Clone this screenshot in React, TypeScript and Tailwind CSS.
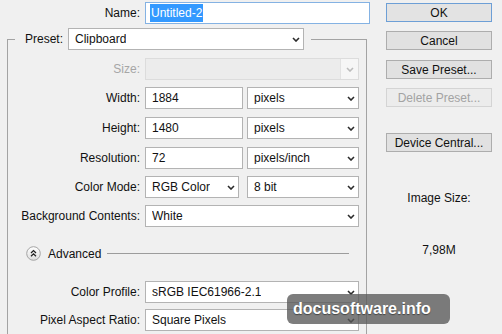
import clsx from "clsx";

function Chevron({ disabled }: { disabled?: boolean }) {
  return (
    <svg width="8" height="5" viewBox="0 0 8 5" className="shrink-0">
      <path
        d="M1 1L4 4L7 1"
        fill="none"
        stroke={disabled ? "#bcbcbc" : "#2b2b2b"}
        strokeWidth="1.6"
      />
    </svg>
  );
}

function Select({ value, className }: { value: string; className?: string }) {
  return (
    <div
      className={clsx(
        "flex h-[22px] items-center justify-between border border-[#b3b3b3] bg-white pl-[6px] pr-[3px]",
        className,
      )}
    >
      <span className="truncate">{value}</span>
      <Chevron />
    </div>
  );
}

function Input({ value, className }: { value: string; className?: string }) {
  return (
    <div className={clsx("flex h-[22px] items-center border border-[#b3b3b3] bg-white pl-[6px]", className)}>
      {value}
    </div>
  );
}

function Row({ label, children, className, dim }: { label: string; children: React.ReactNode; className?: string; dim?: boolean }) {
  return (
    <div className={clsx("flex items-center gap-[5px]", className)}>
      <div className={clsx("w-[132px] whitespace-nowrap text-right", dim && "text-[#a6a6a6]")}>{label}</div>
      {children}
    </div>
  );
}

function Button({ label, primary, disabled, className }: { label: string; primary?: boolean; disabled?: boolean; className?: string }) {
  return (
    <div
      className={clsx(
        "flex h-[19px] items-center justify-center border",
        primary ? "border-[#6d9fd6] bg-[#e3e3e3]" : "border-[#adadad] bg-[#e1e1e1]",
        disabled && "border-[#d4d4d4] bg-[#ececec] text-[#a3a3a3]",
        className,
      )}
    >
      {label}
    </div>
  );
}

function AdvancedToggle() {
  return (
    <svg width="15" height="15" viewBox="0 0 15 15" className="shrink-0">
      <defs>
        <linearGradient id="adv" x1="0" y1="0" x2="0" y2="1">
          <stop offset="0" stopColor="#ffffff" />
          <stop offset="1" stopColor="#dedede" />
        </linearGradient>
      </defs>
      <circle cx="7.5" cy="7.5" r="6.8" fill="url(#adv)" stroke="#a4a4a4" strokeWidth="1" />
      <path d="M5 7L7.5 4.6L10 7M5 10.2L7.5 7.8L10 10.2" fill="none" stroke="#222" strokeWidth="1.3" />
    </svg>
  );
}

export default function App() {
  return (
    <div className="relative h-[334px] w-[502px] overflow-hidden bg-[#f0f0f0] font-['Liberation_Sans',Arial,sans-serif] text-[12px] leading-none text-[#111]">
      <div className="flex">
        <div className="w-[386px]">
          <div className="flex items-center gap-[5px] pt-[2px]">
            <div className="w-[140px] text-right">Name:</div>
            <div className="flex h-[22px] w-[225px] items-center border border-[#84b2e3] bg-white pl-[4px]">
              <span className="bg-[#3399ff] px-[1px] py-[3px] text-white">Untitled-2</span>
            </div>
          </div>

          <fieldset className="ml-[7px] mt-[4px] h-[320px] w-[360px] min-w-0 border border-b-0 border-[#a3a3a3] p-0">
            <legend className="ml-[7px] flex items-center gap-[5px] pl-[8px] pr-[7px]">
              <span className="w-[40px] text-right">Preset:</span>
              <Select value="Clipboard" className="w-[236px]" />
            </legend>

            <Row label="Size:" dim className="mt-[8px]">
              <div className="flex h-[22px] w-[214px] items-center border border-[#dcdcdc] bg-[#ececec]">
                <div className="flex-1" />
                <div className="flex h-full w-[18px] items-center justify-center border-l border-[#e2e2e2] bg-[#f6f6f6]">
                  <Chevron disabled />
                </div>
              </div>
            </Row>

            <Row label="Width:" className="mt-[7px]">
              <Input value="1884" className="w-[98px]" />
              <Select value="pixels" className="-ml-px w-[112px]" />
            </Row>

            <Row label="Height:" className="mt-[8px]">
              <Input value="1480" className="w-[98px]" />
              <Select value="pixels" className="-ml-px w-[112px]" />
            </Row>

            <Row label="Resolution:" className="mt-[8px]">
              <Input value="72" className="w-[98px]" />
              <Select value="pixels/inch" className="-ml-px w-[112px]" />
            </Row>

            <Row label="Color Mode:" className="mt-[7px]">
              <Select value="RGB Color" className="w-[94px]" />
              <Select value="8 bit" className="ml-[3px] w-[112px]" />
            </Row>

            <Row label="Background Contents:" className="mt-[7px]">
              <Select value="White" className="w-[214px]" />
            </Row>

            <div className="ml-[18px] mr-[17px] mt-[19px] flex h-[15px] items-center">
              <AdvancedToggle />
              <span className="ml-[7px]">Advanced</span>
              <div className="ml-[6px] h-px flex-1 bg-[#9c9c9c]" />
            </div>

            <Row label="Color Profile:" className="mt-[20px]">
              <Select value="sRGB IEC61966-2.1" className="w-[214px]" />
            </Row>

            <Row label="Pixel Aspect Ratio:" className="mt-[6px]">
              <Select value="Square Pixels" className="w-[214px]" />
            </Row>
          </fieldset>
        </div>

        <div className="flex w-[106px] flex-col pt-[3px]">
          <Button label="OK" primary />
          <Button label="Cancel" className="mt-[9px]" />
          <Button label="Save Preset..." className="mt-[10px]" />
          <Button label="Delete Preset..." disabled className="mt-[9px]" />
          <Button label="Device Central..." className="mt-[26px]" />
          <div className="mt-[39px] text-center leading-[15px]">Image Size:</div>
          <div className="mt-[37px] text-center leading-[15px]">7,98M</div>
        </div>
      </div>

      <div className="absolute left-[287px] top-[294px] flex h-[30px] w-[163px] items-center rounded-[6px] bg-[rgba(88,88,88,0.78)] pl-[6px] text-[16px] font-bold text-white [text-shadow:0_1px_1px_rgba(0,0,0,0.45)]">
        docusoftware.info
      </div>
    </div>
  );
}
